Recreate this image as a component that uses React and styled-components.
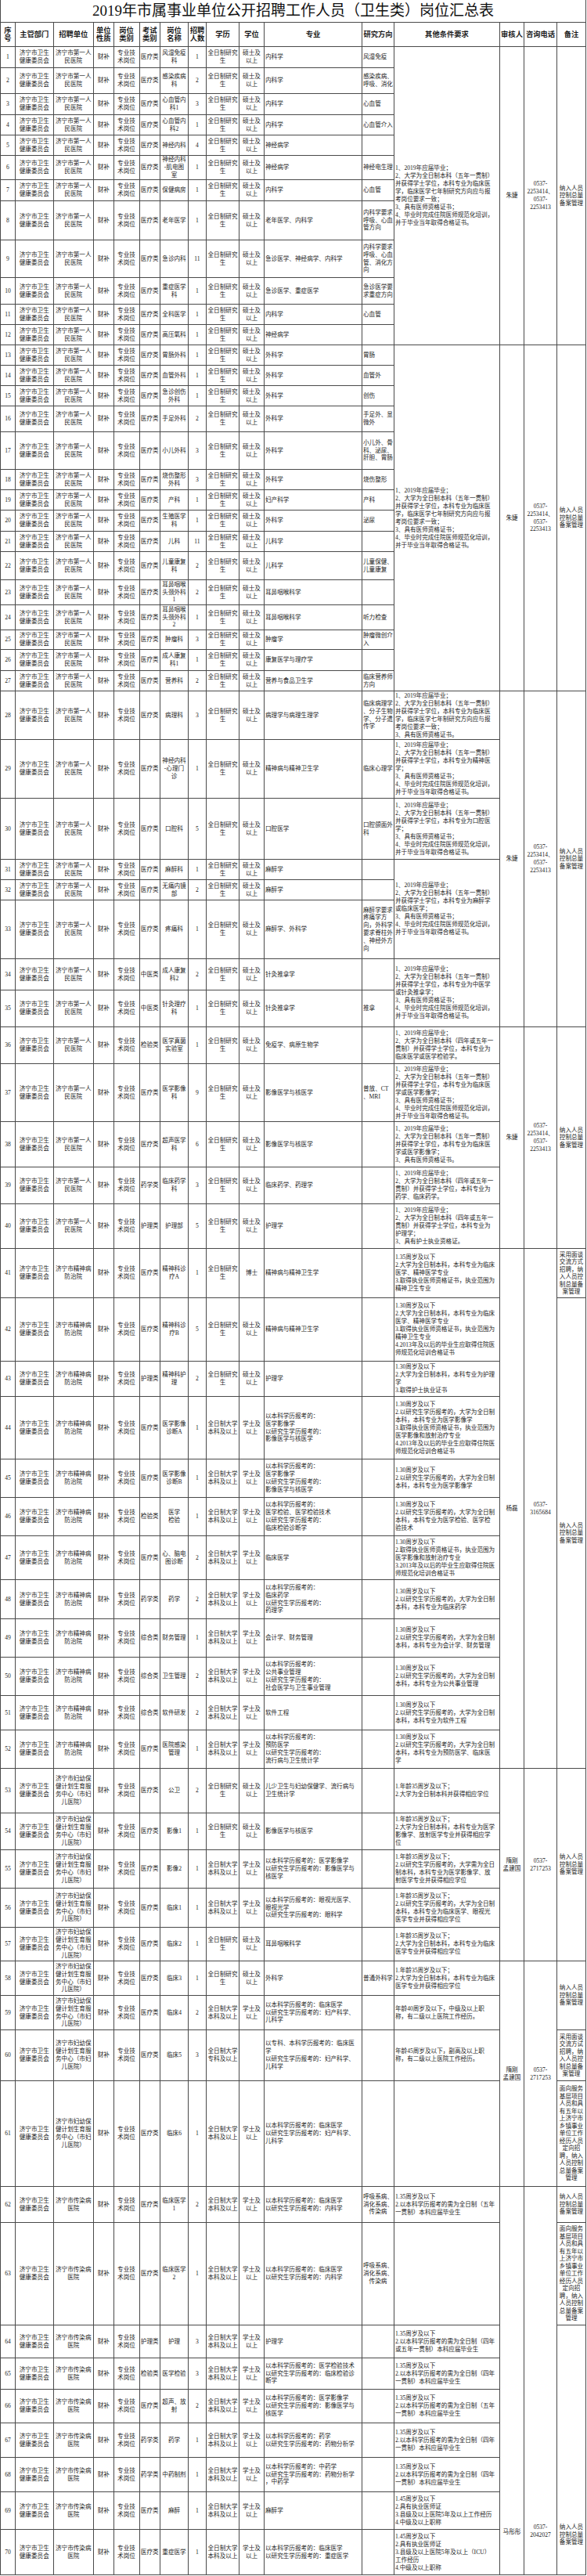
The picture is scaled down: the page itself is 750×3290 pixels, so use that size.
import React from "react";
import styled, { createGlobalStyle } from "styled-components";

const Global = createGlobalStyle`
  html, body { margin: 0; padding: 0; background: #fff; }
  body { font-family: "Liberation Serif", "Noto Sans CJK SC", serif; color: #1c1c1c; }
`;

const Sheet = styled.table`
  width: 748px;
  table-layout: fixed;
  border-collapse: collapse;
  font-family: "Liberation Serif", "Noto Sans CJK SC", serif;
`;

const TitleCell = styled.th`
  height: 28px;
  padding: 0;
  font-size: 19px;
  font-weight: 400;
  line-height: 28px;
  text-align: center;
  vertical-align: middle;
  color: #111;
  border-left: 1px solid #4a4a4a;
  border-right: 1px solid #4a4a4a;
`;

const HeadRow = styled.tr`
  height: 31px;
`;

const HeadCell = styled.th`
  padding: 0;
  font-size: 9.3px;
  font-weight: 700;
  line-height: 10px;
  text-align: center;
  vertical-align: middle;
  white-space: pre;
  color: #1a1a1a;
  border: 1px solid #4a4a4a;
`;

const Row = styled.tr`
  height: ${(p) => p.$h}px;
`;

const Cell = styled.td`
  padding: ${(p) => p.$top || 0}px 1px 0 1px;
  font-size: 7.6px;
  line-height: ${(p) => p.$lh || 9.8}px;
  text-align: ${(p) => p.$align || "center"};
  vertical-align: ${(p) => (p.$top ? "top" : "middle")};
  white-space: pre;
  overflow: hidden;
  color: #1c1c1c;
  border: 1px solid #4a4a4a;
`;

const COLS = [19, 48.5, 51.5, 25.5, 33, 26.5, 36, 23, 42, 32, 125, 41, 135, 31, 42, 37];

const BOUNDS = [59.3, 86, 119.3, 145.7, 171.7, 198, 229, 255.7, 306, 353.7, 387.7, 414, 440, 466, 492, 518.3, 551, 599.3, 625.3, 651.3, 677.7, 703.7, 740, 771.7, 804.3, 829, 855.7, 881.7, 944, 1019.3, 1096.7, 1122.7, 1149.3, 1224.3, 1264, 1310.7, 1357.7, 1432.3, 1490.3, 1537.3, 1594.3, 1657.3, 1738.3, 1783.3, 1863.3, 1912.3, 1960.7, 2017.3, 2066.7, 2115.7, 2165, 2209, 2257.7, 2315.3, 2362.3, 2410.7, 2460.7, 2504, 2547.7, 2592.3, 2656.7, 2791.7, 2838.3, 2969, 3010.7, 3051, 3094.3, 3137.7, 3181.7, 3230, 3288.3];

const U1 = "济宁市第一人\n民医院";
const U2 = "济宁市精神病\n防治院";
const U3 = "济宁市妇幼保\n健计划生育服\n务中心（市妇\n儿医院）";
const U4 = "济宁市传染病\n医院";
const GR = "全日制研究\n生";
const MS = "硕士及\n以上";
const BK = "全日制大学\n本科及以上";
const XS = "学士及\n以上";

const r = (exam, post, count, major, dir, extra = {}) => ({ exam, post, count, major, dir, ...extra });
const bk = { edu: BK, deg: XS };

const ROWS = [
  r("医疗类", "风湿免疫\n科", "1", "内科学", "风湿免疫"),
  r("医疗类", "感染疾病\n科", "2", "内科学", "感染疾病、\n呼吸、消化"),
  r("医疗类", "心血管内\n科1", "3", "内科学", "心血管"),
  r("医疗类", "心血管内\n科2", "1", "内科学", "心血管介入"),
  r("医疗类", "神经内科", "4", "神经病学", ""),
  r("医疗类", "神经内科\n-肌电图\n室", "1", "神经病学", "神经电生理"),
  r("医疗类", "保健病房", "1", "内科学", "心血管"),
  r("医疗类", "老年医学", "1", "老年医学、内科学", "内科学要求\n呼吸、心血\n管方向"),
  r("医疗类", "急诊内科", "11", "急诊医学、神经病学、内科学", "内科学要求\n呼吸、心血\n管、消化方\n向"),
  r("医疗类", "重症医学\n科", "1", "急诊医学、重症医学", "急诊医学要\n求重症方向"),
  r("医疗类", "全科医学", "1", "内科学", "心血管"),
  r("医疗类", "高压氧科", "1", "神经病学", ""),
  r("医疗类", "胃肠外科", "1", "外科学", "胃肠"),
  r("医疗类", "血管外科", "1", "外科学", "血管外"),
  r("医疗类", "急诊创伤\n外科", "1", "外科学", "创伤"),
  r("医疗类", "手足外科", "2", "外科学", "手足外、显\n微外"),
  r("医疗类", "小儿外科", "3", "外科学", "小儿外、骨\n科、泌尿、\n肝胆、胃肠"),
  r("医疗类", "烧伤整形\n外科", "3", "外科学", "烧伤整形"),
  r("医疗类", "产科", "1", "妇产科学", "产科"),
  r("医疗类", "生殖医学\n科", "1", "外科学", "泌尿"),
  r("医疗类", "儿科", "11", "儿科学", ""),
  r("医疗类", "儿童康复\n科", "2", "儿科学", "儿童保健、\n儿童康复"),
  r("医疗类", "耳鼻咽喉\n头颈外科\n1", "2", "耳鼻咽喉科学", ""),
  r("医疗类", "耳鼻咽喉\n头颈外科\n2", "1", "耳鼻咽喉科学", "听力检查"),
  r("医疗类", "肿瘤科", "3", "肿瘤学", "肿瘤微创介\n入"),
  r("医疗类", "成人康复\n科1", "1", "康复医学与理疗学", ""),
  r("医疗类", "营养科", "2", "营养与食品卫生学", "临床营养师\n方向"),
  r("医疗类", "病理科", "3", "病理学与病理生理学", "临床病理学\n、分子生物\n学、分子遗\n传学"),
  r("医疗类", "神经内科\n-心理门\n诊", "1", "精神病与精神卫生学", "临床心理学"),
  r("医疗类", "口腔科", "5", "口腔医学", "口腔颌面外\n科"),
  r("医疗类", "麻醉科", "1", "麻醉学", ""),
  r("医疗类", "无痛内镜\n部", "2", "麻醉学", ""),
  r("医疗类", "疼痛科", "1", "麻醉学、外科学", "麻醉学要求\n疼痛学方\n向，外科学\n要求脊柱外\n、神经外方\n向"),
  r("中医类", "成人康复\n科2", "2", "针灸推拿学", ""),
  r("中医类", "针灸理疗\n科", "1", "针灸推拿学", "推拿"),
  r("检验类", "医学真菌\n实验室", "1", "免疫学、病原生物学", ""),
  r("医疗类", "医学影像\n科", "9", "影像医学与核医学", "普放、CT\n、MRI"),
  r("医疗类", "超声医学\n科", "6", "影像医学与核医学", ""),
  r("药学类", "临床药学\n科", "3", "临床药学、药理学", ""),
  r("护理类", "护理部", "5", "护理学", ""),
  r("医疗类", "精神科诊\n疗A", "1", "精神病与精神卫生学", "", { deg: "博士" }),
  r("医疗类", "精神科诊\n疗B", "5", "精神病与精神卫生学", ""),
  r("护理类", "精神科护\n理", "2", "护理学", ""),
  r("医疗类", "医学影像\n诊断A", "1", "以本科学历报考的：\n医学影像学\n以研究生学历报考的：\n影像医学与核医学", "", bk),
  r("医疗类", "医学影像\n诊断B", "1", "以本科学历报考的：\n医学影像学\n以研究生学历报考的：\n影像医学与核医学", "", bk),
  r("检验类", "医学\n检验", "1", "以本科学历报考的：\n医学检验、医学检验技术\n以研究生学历报考的：\n临床检验诊断学", "", bk),
  r("医疗类", "心、脑电\n图诊断", "2", "临床医学", "", bk),
  r("药学类", "药学", "2", "以本科学历报考的：\n临床药学\n以研究生学历报考的：\n药理学", "", bk),
  r("综合类", "财务管理", "1", "会计学、财务管理", "", bk),
  r("综合类", "卫生管理", "2", "以本科学历报考的：\n公共事业管理\n以研究生学历报考的：\n社会医学与卫生事业管理", "", bk),
  r("综合类", "软件研发", "2", "软件工程", "", bk),
  r("医疗类", "医院感染\n管理", "1", "以本科学历报考的：\n预防医学\n以研究生学历报考的：\n流行病与卫生统计学", "", bk),
  r("医疗类", "公卫", "2", "儿少卫生与妇幼保健学、流行病与\n卫生统计学", ""),
  r("医疗类", "影像1", "1", "影像医学与核医学", ""),
  r("医疗类", "影像2", "1", "以本科学历报考的：医学影像学\n以研究生学历报考的：影像医学与\n核医学", "", bk),
  r("医疗类", "临床1", "1", "以本科学历报考的：眼视光医学、\n眼视光学\n以研究生学历报考的：眼科学", "", bk),
  r("医疗类", "临床2", "1", "耳鼻咽喉科学", ""),
  r("医疗类", "临床3", "1", "外科学", "普通外科学"),
  r("医疗类", "临床4", "2", "以本科学历报考的：临床医学\n以研究生学历报考的：妇产科学、\n儿科学", "", bk),
  r("医疗类", "临床5", "3", "以专科、本科学历报考的：临床医\n学\n以研究生学历报考的：妇产科学、\n儿科学", "", { edu: "全日制大学\n专科及以上", deg: "" }),
  r("医疗类", "临床6", "1", "以本科学历报考的：临床医学\n以研究生学历报考的：妇产科学、\n儿科学", "", bk),
  r("医疗类", "临床医学\n1", "2", "以本科学历报考的：临床医学\n以研究生学历报考的：内科学", "呼吸系病、\n消化系病、\n传染病", { ...bk, dirCenter: true }),
  r("医疗类", "临床医学\n2", "1", "以本科学历报考的：临床医学\n以研究生学历报考的：内科学", "呼吸系病、\n消化系病、\n传染病", { ...bk, dirCenter: true }),
  r("护理类", "护理", "3", "护理学", "", bk),
  r("检验类", "医学检验", "3", "以本科学历报考的：医学检验技术\n以研究生学历报考的：临床检验诊\n断学", "", bk),
  r("医疗类", "超声、放\n射", "2", "以本科学历报考的：医学影像学\n以研究生学历报考的：影像医学与\n核医学", "", bk),
  r("药学类", "药学", "1", "以本科学历报考的：药学\n以研究生学历报考的：药物分析学", "", bk),
  r("药学类", "中药制剂", "1", "以本科学历报考的：中药学\n以研究生学历报考的：药物分析学\n，中药学", "", bk),
  r("医疗类", "麻醉", "1", "麻醉学", "", bk),
  r("医疗类", "重症医学", "1", "以本科学历报考的：临床医学\n以研究生学历报考的：重症医学", "", bk),
];

const unitOf = (n) => (n <= 40 ? U1 : n <= 52 ? U2 : n <= 61 ? U3 : U4);
const isGrad = (n) => n <= 43 || n === 53 || n === 54 || n === 57 || n === 58;
const eduOf = (n) => (isGrad(n) ? GR : BK);
const degOf = (n) => (isGrad(n) ? MS : XS);

const REQ_A = "1、2019年应届毕业；\n2、大学为全日制本科（五年一贯制）\n并获得学士学位，本科专业为临床医\n学，临床医学七年制研究方向应与报\n考岗位要求一致；\n3、具有医师资格证书；\n4、毕业时完成住院医师规范化培训，\n并于毕业当年取得合格证书。";
const reqGrad = (major) => `1、2019年应届毕业；\n2、大学为全日制本科（五年一贯制）\n并获得学士学位，本科专业为${major}\n3、具有医师资格证书；\n4、毕业时完成住院医师规范化培训，\n并于毕业当年取得合格证书。`;
const J30 = "1.30周岁及以下\n2.以研究生学历报考的，大学为全日制\n本科，本科专业为";
const J35 = "1.年龄35周岁及以下；\n";
const C35 = (y) => `1.35周岁及以下\n2.以本科学历报考的需为全日制（${y}）本科应届毕业生`;

const REQ = {
  1: [12, REQ_A],
  13: [15, REQ_A],
  28: [1, "1、2019年应届毕业；\n2、大学为全日制本科（五年一贯制）\n并获得学士学位，本科专业为临床医\n学，临床医学七年制研究方向应与报\n考岗位要求一致；\n3、具有医师资格证书。"],
  29: [1, reqGrad("精神医\n学；")],
  30: [1, reqGrad("口腔医\n学；")],
  31: [3, reqGrad("麻醉学\n或临床医学；")],
  34: [2, reqGrad("中医学\n或针灸推拿学；")],
  36: [1, "1、2019年应届毕业；\n2、大学为全日制本科（四年或五年一\n贯制）并获得学士学位，本科专业为\n临床医学或医学检验学。"],
  37: [1, reqGrad("临床医\n学或医学影像学；")],
  38: [1, "1、2019年应届毕业；\n2、大学为全日制本科（五年一贯制）\n并获得学士学位，本科专业为临床医\n学或医学影像学；\n3、具有医师资格证书。"],
  39: [1, "1、2019年应届毕业；\n2、大学为全日制本科（四年或五年一\n贯制）并获得学士学位，本科专业为\n药学、临床药学。"],
  40: [1, "1、2019年应届毕业；\n2、大学为全日制本科（四年或五年一\n贯制）并获得学士学位，本科专业为\n护理学；\n3、具有护士执业资格证。"],
  41: [1, "1.35周岁及以下\n2.大学为全日制本科，本科专业为临床\n医学、精神医学专业\n3.取得执业医师资格证书，执业范围为\n精神卫生专业"],
  42: [1, "1.30周岁及以下\n2.大学为全日制本科，本科专业为临床\n医学、精神医学专业\n3.取得执业医师资格证书，执业范围为\n精神卫生专业\n4.2013年及以后的毕业生应取得住院医\n师规范化培训合格证书"],
  43: [1, "1.30周岁及以下\n2.大学为全日制本科，本科专业为护理\n学\n3.取得护士执业证书"],
  44: [1, J30 + "医学影像学\n3.取得执业医师资格证书，执业范围为\n医学影像和放射治疗专业\n4.2013年及以后的毕业生应取得住院医\n师规范化培训合格证书"],
  45: [1, J30 + "医学影像学"],
  46: [1, J30 + "医学检验、医学检\n验技术"],
  47: [1, "1.30周岁及以下\n2.取得执业医师资格证书，执业范围为\n医学影像和放射治疗专业\n3.2013年及以后的毕业生应取得住院医\n师规范化培训合格证书"],
  48: [1, J30 + "临床药学"],
  49: [1, J30 + "会计学、财务管理"],
  50: [1, J30 + "公共事业管理"],
  51: [1, J30 + "软件工程"],
  52: [1, J30 + "预防医学、临床医\n学"],
  53: [1, J35 + "2.大学为全日制本科并获得相应学位"],
  54: [1, J35 + "2.大学为全日制本科，本科专业为医学\n影像学、放射医学专业并获得相应学\n位"],
  55: [1, J35 + "2.以研究生学历报考的，大学需为全日\n制本科，本科专业为医学影像学、放\n射医学专业并获得相应学位"],
  56: [1, J35 + "2.以研究生学历报考的，大学为全日制\n本科，本科专业为临床医学、眼视光\n医学专业并获得相应学位"],
  57: [1, J35 + "2.大学为全日制本科，本科专业为临床\n医学专业并获得相应学位"],
  58: [1, J35 + "2.大学为全日制本科，本科专业为临床\n医学专业并获得相应学位"],
  59: [1, "年龄40周岁及以下，中级及以上职\n称，有二级以上医院工作经历。"],
  60: [1, "年龄45周岁及以下，副高及以上职\n称，有二级以上医院工作经历。"],
  61: [1, ""],
  62: [1, C35("五年\n一贯制")],
  63: [1, ""],
  64: [1, C35("四年\n或五年一贯制")],
  65: [1, C35("四年\n一贯制")],
  66: [1, C35("五年\n一贯制")],
  67: [1, C35("四年\n一贯制")],
  68: [1, C35("四年\n一贯制")],
  69: [1, "1.45周岁及以下\n2.具有执业医师证\n3.县级及以上医院5年及以上工作经历\n4.中级及以上职称"],
  70: [1, "1.45周岁及以下\n2.具有执业医师证\n3.县级及以上医院5年及以上（ICU）\n工作经历\n4.中级及以上职称"],
};

const PH1 = "0537-\n2253414、\n0537-\n2253413";
const CHECK = {
  1: [12, "朱婕", PH1],
  13: [15, "朱婕", PH1],
  28: [8, "朱婕", PH1],
  36: [5, "朱婕", PH1],
  41: [12, "杨磊", "0537-\n3165684"],
  53: [5, "隋刚\n孟建国", "0537-\n2717253"],
  58: [4, "隋刚\n孟建国", "0537-\n2717253"],
  62: [9, "马彤彤", "0537-\n2042027", 436, 430],
};

const NOTE_STD = "纳入人员\n控制总量\n备案管理";
const NOTE_BASE = "面向服务\n基层项目\n人员和具\n有五年以\n上济宁市\n乡镇事业\n单位工作\n经历人员\n定向招\n聘，纳入\n人员控制\n总量备案\n管理";
const NOTES = {
  1: [12, NOTE_STD],
  13: [15, NOTE_STD],
  28: [8, NOTE_STD],
  36: [5, NOTE_STD],
  41: [1, "采用面谈\n交流方式\n招聘，纳\n入人员控\n制总量备\n案管理"],
  42: [11, NOTE_STD],
  53: [5, NOTE_STD],
  58: [2, NOTE_STD],
  60: [1, "采用面谈\n交流方试\n招聘，纳\n入人员控\n制总量备\n案管理"],
  61: [1, NOTE_BASE],
  62: [1, NOTE_STD],
  63: [1, NOTE_BASE],
  64: [7, NOTE_STD, 253],
};

const HEAD = ["序\n号", "主管部门", "招聘单位", "单位\n性质", "岗位\n类别", "考试\n类别", "岗位\n名称", "招聘\n人数", "学历", "学位", "专业", "研究方向", "其他条件要求", "审核人", "咨询电话", "备注"];

export default function App() {
  return (
    <>
      <Global />
      <Sheet>
        <colgroup>
          {COLS.map((w, i) => (
            <col key={i} style={{ width: w }} />
          ))}
        </colgroup>
        <thead>
          <tr>
            <TitleCell colSpan={16}>2019年市属事业单位公开招聘工作人员（卫生类）岗位汇总表</TitleCell>
          </tr>
          <HeadRow>
            {HEAD.map((h, i) => (
              <HeadCell key={i}>{h}</HeadCell>
            ))}
          </HeadRow>
        </thead>
        <tbody>
          {ROWS.map((row, i) => {
            const n = i + 1;
            const h = Math.round(BOUNDS[n]) - Math.round(BOUNDS[n - 1]);
            const req = REQ[n];
            const chk = CHECK[n];
            const note = NOTES[n];
            return (
              <Row key={n} $h={h}>
                <Cell>{n}</Cell>
                <Cell>{"济宁市卫生\n健康委员会"}</Cell>
                <Cell>{unitOf(n)}</Cell>
                <Cell>财补</Cell>
                <Cell>{"专业技\n术岗位"}</Cell>
                <Cell>{row.exam}</Cell>
                <Cell>{row.post}</Cell>
                <Cell>{row.count}</Cell>
                <Cell>{row.edu ?? eduOf(n)}</Cell>
                <Cell>{row.deg ?? degOf(n)}</Cell>
                <Cell $align="left">{row.major}</Cell>
                <Cell $align={row.dirCenter ? "center" : "left"}>{row.dir}</Cell>
                {req && (
                  <Cell rowSpan={req[0]} $align="left" $lh={10}>
                    {req[1]}
                  </Cell>
                )}
                {chk && (
                  <Cell rowSpan={chk[0]} $top={chk[3]}>
                    {chk[1]}
                  </Cell>
                )}
                {chk && (
                  <Cell rowSpan={chk[0]} $top={chk[4]}>
                    {chk[2]}
                  </Cell>
                )}
                {note && (
                  <Cell rowSpan={note[0]} $lh={9.5} $top={note[2]}>
                    {note[1]}
                  </Cell>
                )}
              </Row>
            );
          })}
        </tbody>
      </Sheet>
    </>
  );
}
